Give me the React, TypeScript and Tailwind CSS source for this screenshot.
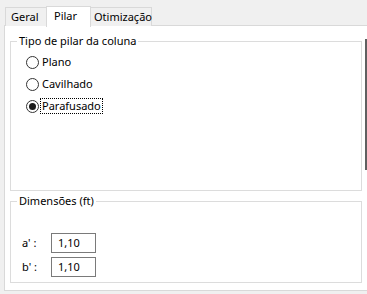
import { useState } from 'react';

const FONT = { fontFamily: '"Segoe UI", "Noto Sans", "Open Sans", sans-serif' };

function Radio({ label, checked, focused, onSelect }: { label: string; checked: boolean; focused?: boolean; onSelect: () => void }) {
  return (
    <div className="flex items-center h-[22px] cursor-default" onClick={onSelect}>
      <span className="w-[13px] h-[13px] rounded-full border border-[#333333] bg-white flex items-center justify-center">
        {checked && <span className="w-[7px] h-[7px] rounded-full bg-[#1a1a1a]" />}
      </span>
      <span className={`ml-[2px] px-[1px] leading-[14px] ${focused ? 'outline outline-1 outline-dotted outline-black' : ''}`}>
        {label}
      </span>
    </div>
  );
}

export default function App() {
  const [tipo, setTipo] = useState('Parafusado');

  return (
    <div className="w-[367px] h-[294px] bg-[#f0f0f0] relative overflow-hidden text-[11px] text-black" style={FONT}>
      {/* Tabs */}
      <div className="flex items-end pl-[5px] h-[26px] pt-[5px]">
        <div className="w-[42px] h-[19px] border border-b-0 border-[#d9d9d9] bg-[#f0f0f0] flex items-center pl-[5px]">Geral</div>
        <div className="w-[45px] h-[21px] -ml-[1px] border border-b-0 border-[#d9d9d9] bg-white flex items-start pt-[1px] pl-[7px] relative z-10 -mb-[1px]">Pilar</div>
        <div className="w-[62px] h-[19px] -ml-[1px] border border-b-0 border-[#d9d9d9] bg-[#f0f0f0] flex items-center pl-[3px] whitespace-nowrap">Otimização</div>
      </div>

      {/* Panel */}
      <div className="ml-[4px] h-[266px] border border-r-0 border-[#d9d9d9] bg-white -mt-[1px] pl-[5px] pt-[15px]">
        <div className="relative w-[352px] h-[150px] border border-[#dcdcdc]">
          <span className="absolute -top-[8px] left-[6px] bg-white px-[2px] leading-[14px]">Tipo de pilar da coluna</span>
          <div className="pt-[9px] pl-[15px] flex flex-col">
            {['Plano', 'Cavilhado', 'Parafusado'].map((t) => (
              <Radio key={t} label={t} checked={tipo === t} focused={t === 'Parafusado'} onSelect={() => setTipo(t)} />
            ))}
          </div>
        </div>

        <div className="relative w-[352px] h-[82px] border border-[#dcdcdc] mt-[10px]">
          <span className="absolute -top-[8px] left-[6px] bg-white px-[2px] leading-[14px]">Dimensões (ft)</span>
          <div className="pt-[31px] pl-[11px] flex flex-col gap-[4px]">
            <div className="flex items-center">
              <span className="w-[29px]">a' :</span>
              <div className="w-[45px] h-[20px] border border-[#7a7a7a] bg-white flex items-center pl-[6px]">1,10</div>
            </div>
            <div className="flex items-center">
              <span className="w-[29px]">b' :</span>
              <div className="w-[45px] h-[20px] border border-[#7a7a7a] bg-white flex items-center pl-[6px]">1,10</div>
            </div>
          </div>
        </div>
      </div>

      {/* scrollbar edge */}
      <div className="absolute left-[365px] top-[39px] w-[2px] h-[131px] bg-[#606060]" />
    </div>
  );
}
